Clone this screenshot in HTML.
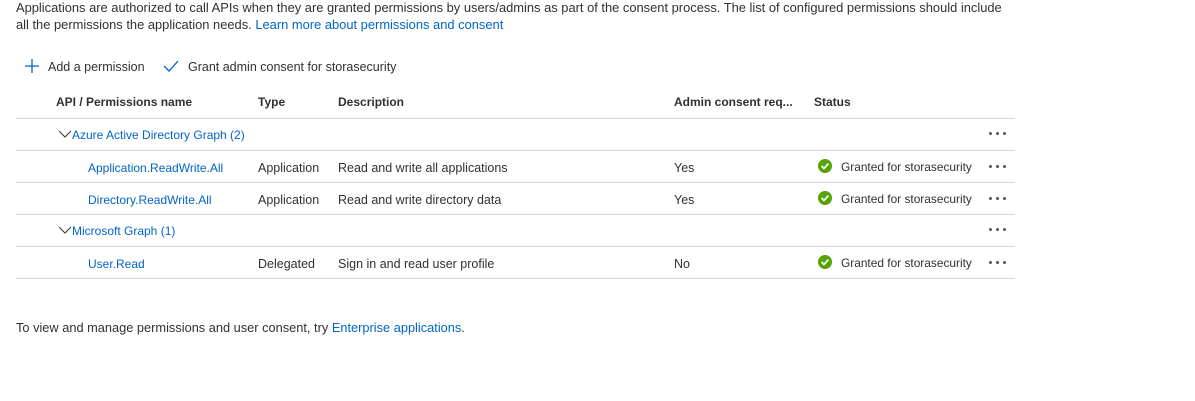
<!DOCTYPE html><html><head><style>
body{margin:0;width:1195px;height:401px;background:#fff;font-family:"Liberation Sans",sans-serif;font-size:12.5px;color:#323130;position:relative;overflow:hidden}
.a{position:absolute;white-space:nowrap;line-height:16px}
a,.l{color:#0064c8;text-decoration:none}
.hr{position:absolute;left:16px;width:999px;height:1px;background:#d6d6d6}
.b{font-weight:bold;color:#323130;font-size:12px}
.dots{position:absolute;left:989px;width:18px;height:3px}
.dots i{position:absolute;top:0;width:3px;height:3px;border-radius:50%;background:#555}
.chk{position:absolute;left:818px;width:14px;height:14px;border-radius:50%;background:#57a300}
.g{font-size:11.9px}
</style></head><body>
<div class="a" style="left:16px;top:0px;font-size:12.9px">Applications are authorized to call APIs when they are granted permissions by users/admins as part of the consent process. The list of configured permissions should include</div>
<div class="a" style="left:16px;top:17px;font-size:12.9px">all the permissions the application needs. <span class="l">Learn more about permissions and consent</span></div>
<svg class="a" style="left:24px;top:58px" width="16" height="16"><path d="M8 1V15M1 8H15" stroke="#0064c8" stroke-width="1.3"/></svg>
<div class="a" style="left:48px;top:59px">Add a permission</div>
<svg class="a" style="left:163px;top:59px" width="16" height="14"><path d="M1 7L6 12L15 2" stroke="#0064c8" stroke-width="1.3" fill="none"/></svg>
<div class="a" style="left:188px;top:59px">Grant admin consent for storasecurity</div>
<div class="a b" style="left:56px;top:94px">API / Permissions name</div>
<div class="a b" style="left:258px;top:94px">Type</div>
<div class="a b" style="left:338px;top:94px">Description</div>
<div class="a b" style="left:674px;top:94px">Admin consent req...</div>
<div class="a b" style="left:814px;top:94px">Status</div>
<div class="hr" style="top:118px"></div>
<div class="hr" style="top:150px"></div>
<div class="hr" style="top:182px"></div>
<div class="hr" style="top:214px"></div>
<div class="hr" style="top:246px"></div>
<div class="hr" style="top:278px"></div>
<svg class="a" style="left:58px;top:130px" width="14" height="8"><path d="M1 1L7 7L13 1" stroke="#323130" fill="none"/></svg>
<div class="a l" style="left:72px;top:127px;font-size:12px">Azure Active Directory Graph (2)</div>
<div class="dots" style="top:132px"><i style="left:0"></i><i style="left:7px"></i><i style="left:14px"></i></div>
<div class="a l" style="left:88px;top:160px;font-size:12px">Application.ReadWrite.All</div>
<div class="a" style="left:258px;top:160px">Application</div>
<div class="a" style="left:338px;top:160px">Read and write all applications</div>
<div class="a" style="left:674px;top:160px">Yes</div>
<div class="chk" style="top:159px"><svg width="14" height="14"><path d="M3.5 7L6 9.5L10.5 4.5" stroke="#fff" stroke-width="1.8" fill="none"/></svg></div>
<div class="a g" style="left:841px;top:159px">Granted for storasecurity</div>
<div class="dots" style="top:165px"><i style="left:0"></i><i style="left:7px"></i><i style="left:14px"></i></div>
<div class="a l" style="left:88px;top:192px;font-size:12px">Directory.ReadWrite.All</div>
<div class="a" style="left:258px;top:192px">Application</div>
<div class="a" style="left:338px;top:192px">Read and write directory data</div>
<div class="a" style="left:674px;top:192px">Yes</div>
<div class="chk" style="top:191px"><svg width="14" height="14"><path d="M3.5 7L6 9.5L10.5 4.5" stroke="#fff" stroke-width="1.8" fill="none"/></svg></div>
<div class="a g" style="left:841px;top:191px">Granted for storasecurity</div>
<div class="dots" style="top:197px"><i style="left:0"></i><i style="left:7px"></i><i style="left:14px"></i></div>
<svg class="a" style="left:58px;top:226px" width="14" height="8"><path d="M1 1L7 7L13 1" stroke="#323130" fill="none"/></svg>
<div class="a l" style="left:72px;top:223px;font-size:12px">Microsoft Graph (1)</div>
<div class="dots" style="top:228px"><i style="left:0"></i><i style="left:7px"></i><i style="left:14px"></i></div>
<div class="a l" style="left:88px;top:256px;font-size:12px">User.Read</div>
<div class="a" style="left:258px;top:256px">Delegated</div>
<div class="a" style="left:338px;top:256px">Sign in and read user profile</div>
<div class="a" style="left:674px;top:256px">No</div>
<div class="chk" style="top:255px"><svg width="14" height="14"><path d="M3.5 7L6 9.5L10.5 4.5" stroke="#fff" stroke-width="1.8" fill="none"/></svg></div>
<div class="a g" style="left:841px;top:255px">Granted for storasecurity</div>
<div class="dots" style="top:261px"><i style="left:0"></i><i style="left:7px"></i><i style="left:14px"></i></div>
<div class="a" style="left:16px;top:320px;font-size:12.8px">To view and manage permissions and user consent, try <span class="l">Enterprise applications</span>.</div>
</body></html>
